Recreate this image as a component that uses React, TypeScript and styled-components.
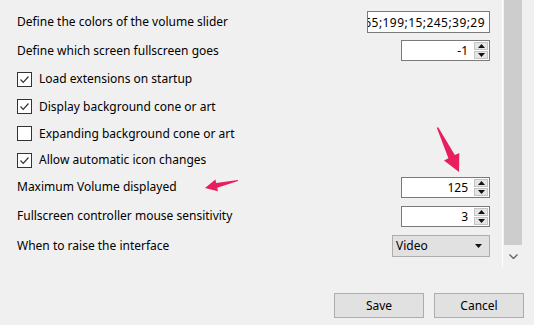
import React from "react";
import styled, { createGlobalStyle } from "styled-components";

const Global = createGlobalStyle`
  html, body {
    margin: 0;
    padding: 0;
    background: #f0f0f0;
  }
  body {
    font-family: "Noto Sans", "Liberation Sans", sans-serif;
    font-size: 12px;
    color: #000;
  }
`;

const Window = styled.div`
  position: relative;
  width: 534px;
  height: 325px;
  overflow: hidden;
  background: #f0f0f0;
`;

const Body = styled.div`
  display: flex;
  height: 267px;
`;

const Pane = styled.div`
  flex: 1;
  overflow: hidden;
  padding: 0 12px 0 17px;
`;

// the list is scrolled down a little: the first row is mostly above the fold
const List = styled.div`
  display: flex;
  flex-direction: column;
  margin-top: -22px;
`;

const Row = styled.div<{ $h: number; $pt?: number }>`
  display: flex;
  align-items: center;
  justify-content: space-between;
  box-sizing: border-box;
  height: ${({ $h }) => $h}px;
  padding-top: ${({ $pt = 0 }) => $pt}px;
  white-space: nowrap;
`;

const Label = styled.span`
  line-height: 16px;
`;

const CheckLabel = styled.label`
  display: flex;
  align-items: center;
  gap: 7px;
  line-height: 16px;
`;

const Box = styled.span`
  display: inline-flex;
  align-items: center;
  justify-content: center;
  width: 13px;
  height: 13px;
  border: 1px solid #333;
  background: #fff;
`;

const Field = styled.div`
  display: flex;
  justify-content: flex-end;
  align-items: center;
  width: 123px;
  height: 22px;
  box-sizing: border-box;
  border: 1px solid #7a7a7a;
  background: #fff;
  padding-right: 4px;
  overflow: hidden;
  letter-spacing: 0.45px;
`;

const Spin = styled.div`
  display: flex;
  align-items: stretch;
  width: 89px;
  height: 21px;
  box-sizing: border-box;
  border: 1px solid #7a7a7a;
  background: #fff;
`;

const SpinValue = styled.span`
  flex: 1;
  display: flex;
  align-items: center;
  justify-content: flex-end;
  padding-right: 6px;
`;

const SpinButtons = styled.div`
  display: flex;
  flex-direction: column;
  width: 14px;
  margin: 1px 1px 1px 0;
  gap: 1px;
`;

const SpinButton = styled.span`
  flex: 1;
  display: flex;
  align-items: center;
  justify-content: center;
  background: #e5e5e5;
  border: 1px solid #c4c4c4;
`;

const Combo = styled.div`
  display: flex;
  align-items: center;
  justify-content: space-between;
  width: 98px;
  height: 22px;
  box-sizing: border-box;
  border: 1px solid #adadad;
  background: #e1e1e1;
  padding: 0 7px 0 3px;
`;

const ScrollBar = styled.div`
  display: flex;
  flex-direction: column;
  width: 20px;
  margin-right: 11px;
  border-left: 1px solid #fff;
`;

const Thumb = styled.div`
  height: 245px;
  margin: 0 1px;
  background: #cdcdcd;
`;

const ArrowButton = styled.div`
  flex: 1;
  display: flex;
  align-items: center;
  justify-content: center;
`;

const Footer = styled.div`
  display: flex;
  justify-content: flex-end;
  gap: 10px;
  padding: 26px 10px 0 0;
`;

const Button = styled.button`
  width: 90px;
  height: 25px;
  border: 1px solid #adadad;
  background: #e1e1e1;
  font: inherit;
  color: #000;
  padding: 0;
`;

const Overlay = styled.svg`
  position: absolute;
  left: 0;
  top: 0;
  pointer-events: none;
`;

function Check({ on }: { on?: boolean }) {
  return (
    <Box>
      {on && (
        <svg width="11" height="11" viewBox="0 0 11 11">
          <path d="M1.5 5.5 L4.2 8.3 L9.5 2.5" fill="none" stroke="#333" strokeWidth="1.2" />
        </svg>
      )}
    </Box>
  );
}

function Triangle({ up }: { up?: boolean }) {
  return (
    <svg width="7" height="4" viewBox="0 0 7 4">
      <path d={up ? "M0 4 L3.5 0 L7 4 Z" : "M0 0 L7 0 L3.5 4 Z"} fill="#111" />
    </svg>
  );
}

function SpinBox({ value }: { value: string }) {
  return (
    <Spin>
      <SpinValue>{value}</SpinValue>
      <SpinButtons>
        <SpinButton>
          <Triangle up />
        </SpinButton>
        <SpinButton>
          <Triangle />
        </SpinButton>
      </SpinButtons>
    </Spin>
  );
}

type Pt = [number, number];

// tapered pink marker arrow, as drawn on top of the screenshot
function arrowPath(tail: Pt, tip: Pt, headLen: number, headW: number, w0: number, w1: number) {
  const dx = tip[0] - tail[0];
  const dy = tip[1] - tail[1];
  const len = Math.hypot(dx, dy);
  const ux = dx / len;
  const uy = dy / len;
  const nx = -uy;
  const ny = ux;
  const bx = tip[0] - ux * headLen;
  const by = tip[1] - uy * headLen;
  const p = (x: number, y: number) => `${x.toFixed(1)} ${y.toFixed(1)}`;
  return [
    "M" + p(tail[0] + nx * w0, tail[1] + ny * w0),
    "L" + p(bx + nx * w1, by + ny * w1),
    "L" + p(bx + nx * headW, by + ny * headW),
    "L" + p(tip[0], tip[1]),
    "L" + p(bx - nx * headW, by - ny * headW),
    "L" + p(bx - nx * w1, by - ny * w1),
    "L" + p(tail[0] - nx * w0, tail[1] - ny * w0),
    "Z",
  ].join(" ");
}

export default function App() {
  return (
    <Window>
      <Global />
      <Body>
        <Pane>
          <List>
            <Row $h={28}>
              <CheckLabel>
                <Check />
                Show unimportant error and warnings dialogs
              </CheckLabel>
            </Row>
            <Row $h={30} $pt={2}>
              <Label>Define the colors of the volume slider</Label>
              <Field>65;199;15;245;39;29</Field>
            </Row>
            <Row $h={29}>
              <Label>Define which screen fullscreen goes</Label>
              <SpinBox value="-1" />
            </Row>
            <Row $h={28}>
              <CheckLabel>
                <Check on />
                Load extensions on startup
              </CheckLabel>
            </Row>
            <Row $h={27}>
              <CheckLabel>
                <Check on />
                Display background cone or art
              </CheckLabel>
            </Row>
            <Row $h={27}>
              <CheckLabel>
                <Check />
                Expanding background cone or art
              </CheckLabel>
            </Row>
            <Row $h={26}>
              <CheckLabel>
                <Check on />
                Allow automatic icon changes
              </CheckLabel>
            </Row>
            <Row $h={28}>
              <Label>Maximum Volume displayed</Label>
              <SpinBox value="125" />
            </Row>
            <Row $h={30}>
              <Label>Fullscreen controller mouse sensitivity</Label>
              <SpinBox value="3" />
            </Row>
            <Row $h={29}>
              <Label>When to raise the interface</Label>
              <Combo>
                Video
                <Triangle />
              </Combo>
            </Row>
          </List>
        </Pane>
        <ScrollBar>
          <Thumb />
          <ArrowButton>
            <svg width="9" height="5" viewBox="0 0 9 5">
              <path d="M0.5 0.5 L4.5 4.5 L8.5 0.5" fill="none" stroke="#606060" strokeWidth="1.3" />
            </svg>
          </ArrowButton>
        </ScrollBar>
      </Body>
      <Footer>
        <Button>Save</Button>
        <Button>Cancel</Button>
      </Footer>
      <Overlay width="534" height="325">
        <path d={arrowPath([238, 180.5], [205, 188], 12, 6, 0.6, 2.4)} fill="#e81f5c" />
        <path d={arrowPath([437.5, 127.5], [459, 172], 17, 8.5, 0.8, 3.6)} fill="#e81f5c" />
      </Overlay>
    </Window>
  );
}
